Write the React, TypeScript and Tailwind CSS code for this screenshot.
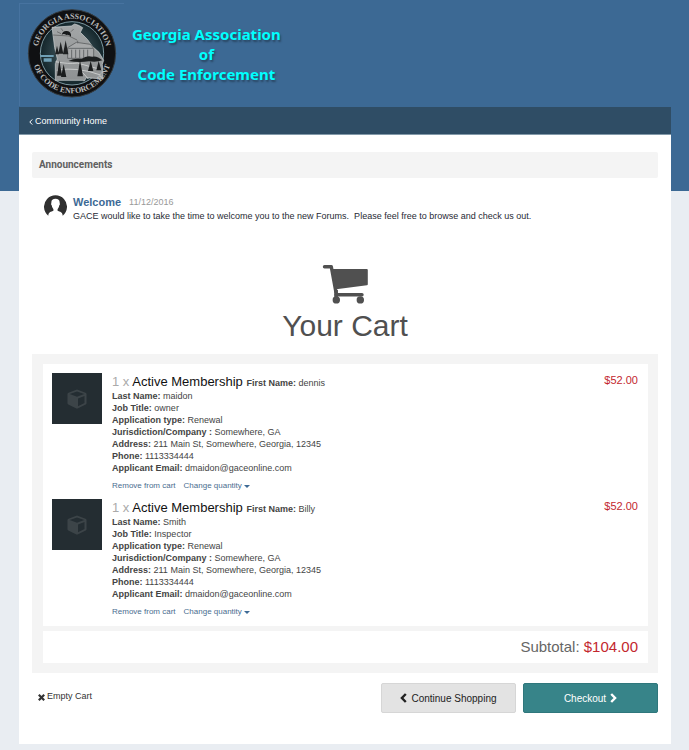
import React from "react";

interface CartItem {
  id: number;
  quantity: number;
  name: string;
  price: string;
  fields: [string, string][];
}

const items: CartItem[] = [
  {
    id: 1,
    quantity: 1,
    name: "Active Membership",
    price: "$52.00",
    fields: [
      ["First Name:", "dennis"],
      ["Last Name:", "maidon"],
      ["Job Title:", "owner"],
      ["Application type:", "Renewal"],
      ["Jurisdiction/Company :", "Somewhere, GA"],
      ["Address:", "211 Main St, Somewhere, Georgia, 12345"],
      ["Phone:", "1113334444"],
      ["Applicant Email:", "dmaidon@gaceonline.com"],
    ],
  },
  {
    id: 2,
    quantity: 1,
    name: "Active Membership",
    price: "$52.00",
    fields: [
      ["First Name:", "Billy"],
      ["Last Name:", "Smith"],
      ["Job Title:", "Inspector"],
      ["Application type:", "Renewal"],
      ["Jurisdiction/Company :", "Somewhere, GA"],
      ["Address:", "211 Main St, Somewhere, Georgia, 12345"],
      ["Phone:", "1113334444"],
      ["Applicant Email:", "dmaidon@gaceonline.com"],
    ],
  },
];

const Seal: React.FC = () => (
  <svg viewBox="15 13 312 306" className="h-[103px] w-[105px] shrink-0 border-l border-t border-[#4773a0]" aria-hidden="true">
    <defs>
      <radialGradient id="sealSky">
        <stop offset="0" stopColor="#4c656b" />
        <stop offset="0.7" stopColor="#263a40" />
        <stop offset="1" stopColor="#14262b" />
      </radialGradient>
      <linearGradient id="sealState" x1="0" y1="0" x2="0" y2="1">
        <stop offset="0" stopColor="#a3a6a7" />
        <stop offset="1" stopColor="#8f9293" />
      </linearGradient>
      <path id="sealTop" d="M67 161a104 104 0 0 1 208 0" />
      <path id="sealBottom" d="M51 161a120 120 0 0 0 240 0" />
    </defs>
    <circle cx="171" cy="161" r="131" fill="#101113" stroke="#343b40" strokeWidth="3" />
    <circle cx="171" cy="161" r="95" fill="url(#sealSky)" stroke="#7d99a2" strokeWidth="3" />
    <path d="M76 166h40v6H76zM86 176h24v10H86z" fill="#6f9fb5" />
    <path d="M111 83l58-4 10-6 12 4 12 7-7 14 22 22 14 20 20 18 14 24-4 12 2 44-50-4-6 10-6-2H121v-50l6-14-8-34z" fill="url(#sealState)" stroke="#cfd3d4" strokeWidth="2" />
    <path d="M140 106q3-14 16-12 14 2 12 18-6-8-14-6-8-6-14 0z" fill="#17191b" />
    <path d="M138 102l-12-6M144 94l-6-8M168 96l8-8M114 106l48 3 24 12" stroke="#555" strokeWidth="2" fill="none" />
    <path d="M158 144l26-16 42 6 10 12v30h-78z" fill="#a7a9aa" stroke="#4b4e50" strokeWidth="2" />
    <path d="M160 146h74M170 150v26M182 150v26M194 150v26M206 150v26M218 150v26M188 131v-8" stroke="#66696b" strokeWidth="3" />
    <path d="M120 164l6-26 6 26zM130 162l7-36 8 36zM144 164l8-42 8 42z" fill="#1e2021" />
    <path d="M160 184q18-9 40-6 14-12 32-7 15-3 30 11-18 7-40 3-30 5-62-1z" fill="#1c1f20" />
    <path d="M122 186q40 8 65 4l72 20M125 212q60-12 132 14M190 204l30 34" stroke="#c9cbcb" strokeWidth="3" fill="none" />
    <path d="M126 228l7-46 8 46zM138 232l8-38 8 38zM187 230l8-48 9 48zM219 214l8-30 8 30zM244 212l7-28 8 28z" fill="#1b1d1e" />
    <g fill="#b9baba" fontFamily="Liberation Serif, serif" fontSize="24" fontWeight="bold" textAnchor="middle">
      <text>
        <textPath href="#sealTop" startOffset="50%">GEORGIA ASSOCIATION</textPath>
      </text>
      <text>
        <textPath href="#sealBottom" startOffset="50%">OF CODE ENFORCEMENT</textPath>
      </text>
    </g>
  </svg>
);

const CartIcon: React.FC = () => (
  <svg viewBox="0 0 46 39" className="h-[39px] w-[46px]" aria-hidden="true">
    <g fill="none" stroke="#505050" strokeLinecap="round" strokeLinejoin="round">
      <path d="M2.500 1.800H9.300L14 27.500" strokeWidth="3.400" />
      <path d="M10 5H44.800V19.300L14 23.300z" fill="#505050" strokeWidth="2" />
      <path d="M14 29.700H40" strokeWidth="3.400" />
    </g>
    <g fill="#505050">
      <path d="M12.300 25h3.600v8h-3.600z" />
      <circle cx="14.300" cy="34.900" r="3.700" />
      <circle cx="38.300" cy="34.900" r="3.700" />
    </g>
  </svg>
);

const Avatar: React.FC = () => (
  <svg viewBox="0 0 23 23" className="size-[23px] shrink-0" aria-hidden="true">
    <path
      d="M4.300 20.700A11.500 11.500 0 1 1 18.700 20.700C18.500 18 17.500 17 14.200 16 13.300 15.700 13.300 14.400 14 13.500c.8-1 1.100-2 1.300-3.200.6-.3.900-1.600.3-2C16 5.500 14.500 3.800 11.500 3.800S7 5.500 7.400 8.300c-.6.400-.3 1.700.3 2 .2 1.200.5 2.200 1.300 3.200.7.900.7 2.200-.2 2.500-3.300 1-4.300 2-4.500 4.700z"
      fill="#303030"
    />
  </svg>
);

const CubeIcon: React.FC = () => (
  <svg viewBox="0 0 20 20" className="size-5" aria-hidden="true">
    <path
      fillRule="evenodd"
      d="M10 .5l8.500 3.200c.6.200 1 .7 1 1.300v9.300c0 .5-.3 1-.8 1.200L10.600 19.400c-.4.200-.8.200-1.200 0L1.300 15.500c-.5-.2-.8-.7-.8-1.200V5c0-.6.400-1.100 1-1.300zm0 1.900L2.700 5.100 10 7.800l7.300-2.700zM11 17.200l6.500-3.200V7L11 9.500z"
      fill="#3c4448"
    />
  </svg>
);

const Chevron: React.FC<{ direction: "left" | "right" }> = ({ direction }) => (
  <svg viewBox="0 0 7 10" className="h-2.5 w-[7px]" fill="none" stroke="currentColor" strokeWidth="2.400" aria-hidden="true">
    <path d={direction === "left" ? "M5.800 1L1.900 5l3.900 4" : "M1.200 1l3.900 4-3.900 4"} />
  </svg>
);

const CartRow: React.FC<{ item: CartItem }> = ({ item }) => {
  const [firstField, ...otherFields] = item.fields;

  return (
    <li className="flex items-start gap-2.5">
      <div className="flex h-[51px] w-[50px] shrink-0 items-center justify-center bg-[#242d32]">
        <CubeIcon />
      </div>
      <div className="min-w-0 flex-1 text-[9px] leading-3 text-[#444]">
        <h2 className="text-[13px] leading-[17px]">
          <span className="text-[#aaa]">{item.quantity} x </span>
          <a href="#item" className="text-[#111]">{item.name}</a>{" "}
          <span className="text-[9px] leading-none">
            <b>{firstField[0]}</b> {firstField[1]}
          </span>
        </h2>
        {otherFields.map(([label, value]) => (
          <p key={label}>
            <b>{label}</b> {value}
          </p>
        ))}
        <div className="mt-1.5 flex gap-2 text-[8px] text-[#4a6d8f]">
          <button type="button">Remove from cart</button>
          <button type="button" className="flex items-center gap-0.5">
            Change quantity
            <span className="border-x-[3px] border-t-[3px] border-x-transparent border-t-[#3d6a95]" />
          </button>
        </div>
      </div>
      <span className="text-[11px] leading-[14px] text-[#c3272e]">{item.price}</span>
    </li>
  );
};

export default function App() {
  return (
    <div className="min-h-screen bg-[#e9edf2] bg-[linear-gradient(#3c6994,#3c6994)] bg-[length:100%_191px] bg-no-repeat px-[18px] pb-1.5 pl-[19px] font-['Liberation_Sans',Arial,sans-serif] text-[#333]">
      <header className="flex h-[107px] items-start pt-[3px]">
        <Seal />
        <h1 className="ml-2 mt-[21px] text-center font-['Noto_Sans','Open_Sans',sans-serif] text-[15px] font-bold leading-5 text-[#0ff] [text-shadow:1px_2px_2px_rgba(0,0,0,0.35)]">
          Georgia Association
          <br />
          of
          <br />
          Code Enforcement
        </h1>
      </header>

      <nav className="flex h-7 items-center border-b border-[#8299a9] bg-[#2f4d65] px-2.5 pt-0.5">
        <a href="#home" className="flex items-center gap-0.5 text-[9px] text-white">
          <svg viewBox="0 0 4 6" className="h-1.5 w-1" fill="none" stroke="currentColor" aria-hidden="true">
            <path d="M3.300.4L.8 3l2.500 2.600" />
          </svg>
          Community Home
        </a>
      </nav>

      <main className="bg-white px-[13px] pb-[31px] pt-[17px]">
        <section>
          <h2 className="rounded-xs bg-[#f4f4f4] px-[7px] font-[Roboto,sans-serif] text-[10px] font-bold leading-[26px] text-[#606060]">
            Announcements
          </h2>
          <article className="flex gap-1.5 pl-3 pt-[17px]">
            <Avatar />
            <div>
              <h3 className="flex items-center gap-2 leading-[14px]">
                <a href="#welcome" className="text-[11px] font-bold text-[#3d6a95]">Welcome</a>
                <time className="text-[9px] text-[#999]">11/12/2016</time>
              </h3>
              <p className="text-[9px] leading-[14px] text-[#272a34]">
                GACE would like to take the time to welcome you to the new Forums.&nbsp; Please feel free to browse and
                check us out.
              </p>
            </div>
          </article>
        </section>

        <div className="flex flex-col items-center pt-[42px] text-[#505050]">
          <CartIcon />
          <h1 className="pb-2.5 pt-1 text-[30px] leading-9">Your Cart</h1>
        </div>

        <section className="space-y-[5px] bg-[#f4f4f4] px-[11px] py-2.5 pr-2.5">
          <ul className="space-y-[7px] bg-white pb-2 pl-[9px] pr-2.5 pt-[9px]">
            {items.map(item => (
              <CartRow key={item.id} item={item} />
            ))}
          </ul>
          <p className="bg-white px-2.5 text-right text-[15px] leading-8 text-[#666]">
            Subtotal: <span className="text-[#c3272e]">$104.00</span>
          </p>
        </section>

        <div className="flex items-center gap-[7px] pt-2.5 text-[10px]">
          <button type="button" className="mb-0.5 ml-1.5 mr-auto flex items-center gap-0.5 text-[9px] text-[#333]">
            <svg viewBox="0 0 7 7" className="size-[7px]" stroke="currentColor" strokeWidth="2.200" aria-hidden="true">
              <path d="M.8.8l5.400 5.400M6.200.8L.8 6.200" />
            </svg>
            Empty Cart
          </button>
          <button
            type="button"
            className="flex h-[30px] w-[135px] items-center justify-center gap-1 rounded-xs border border-[#d6d6d6] bg-[#e3e3e3] text-[#222]"
          >
            <Chevron direction="left" />
            Continue Shopping
          </button>
          <button
            type="button"
            className="flex h-[30px] w-[135px] items-center justify-center gap-1 rounded-xs border border-[#2f777c] bg-[#378489] text-white"
          >
            Checkout
            <Chevron direction="right" />
          </button>
        </div>
      </main>
    </div>
  );
}
